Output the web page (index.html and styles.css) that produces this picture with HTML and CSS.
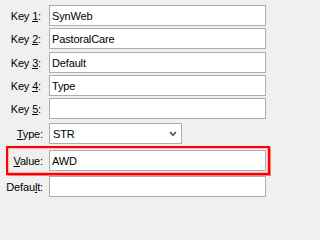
FILE: index.html
```html
<!DOCTYPE html>
<html lang="en">
<head>
<meta charset="utf-8">
<title>Key editor</title>
<link rel="stylesheet" href="styles.css">
</head>
<body>
<form class="form">
  <div class="row">
    <label class="label label-key">Key <u>1</u>:</label>
    <input class="field" type="text" value="SynWeb" readonly>
  </div>
  <div class="row gap-2">
    <label class="label label-key">Key <u>2</u>:</label>
    <input class="field" type="text" value="PastoralCare" readonly>
  </div>
  <div class="row gap-3">
    <label class="label label-key">Key <u>3</u>:</label>
    <input class="field" type="text" value="Default" readonly>
  </div>
  <div class="row gap-2">
    <label class="label label-key">Key <u>4</u>:</label>
    <input class="field" type="text" value="Type" readonly>
  </div>
  <div class="row gap-2">
    <label class="label label-key">Key <u>5</u>:</label>
    <input class="field" type="text" value="" readonly>
  </div>
  <div class="row gap-4">
    <label class="label"><u>T</u>ype:</label>
    <div class="select">
      <span class="select-text">STR</span>
      <svg class="chevron" width="8" height="6" viewBox="0 0 8 6"><path d="M1 1.2 L4 4.2 L7 1.2" fill="none" stroke="#5c5c5c" stroke-width="1.7"/></svg>
    </div>
  </div>
  <div class="row gap-6 highlight">
    <label class="label"><u>V</u>alue:</label>
    <input class="field" type="text" value="AWD" readonly>
  </div>
  <div class="row gap-5">
    <label class="label">Defau<u>l</u>t:</label>
    <input class="field" type="text" value="" readonly>
  </div>
</form>
</body>
</html>
```

FILE: styles.css
```css
html, body {
  margin: 0;
  padding: 0;
  background: #f0f0f0;
}

body {
  font-family: "Liberation Sans", Arial, sans-serif;
  font-size: 11px;
  letter-spacing: -0.15px;
  color: #000;
}

.form {
  display: flex;
  flex-direction: column;
  width: 271px;
  padding-top: 5px;
}

.row {
  display: flex;
  align-items: center;
  height: 21px;
  gap: 6px;
}

.gap-2 { margin-top: 2px; }
.gap-3 { margin-top: 3px; }
.gap-4 { margin-top: 4px; }
.gap-5 { margin-top: 5px; }
.gap-6 { margin-top: 6px; }

.label {
  width: 43px;
  flex: none;
  text-align: right;
  white-space: nowrap;
  box-sizing: border-box;
}

.label-key {
  padding-right: 2px;
}

.label u {
  text-underline-offset: 1px;
}

.field {
  width: 217px;
  height: 21px;
  box-sizing: border-box;
  margin: 0;
  border: 1px solid #adadad;
  background: #fff;
  padding: 0 2px;
  font: inherit;
  letter-spacing: inherit;
  color: #000;
  outline: none;
}

.select {
  width: 133px;
  height: 21px;
  box-sizing: border-box;
  border: 1px solid #adadad;
  background: #fff;
  display: flex;
  align-items: center;
  justify-content: space-between;
  padding: 0 4px 0 3px;
}

.chevron {
  display: block;
}

.highlight {
  position: relative;
}

.highlight::before {
  content: "";
  position: absolute;
  left: 6px;
  right: 1px;
  top: -4px;
  bottom: -4px;
  border: 2px solid #ff0000;
  box-shadow: 0 0 1px 0.5px rgba(255, 0, 0, 0.5), inset 0 0 1px 0.5px rgba(255, 0, 0, 0.45);
  pointer-events: none;
}
```
